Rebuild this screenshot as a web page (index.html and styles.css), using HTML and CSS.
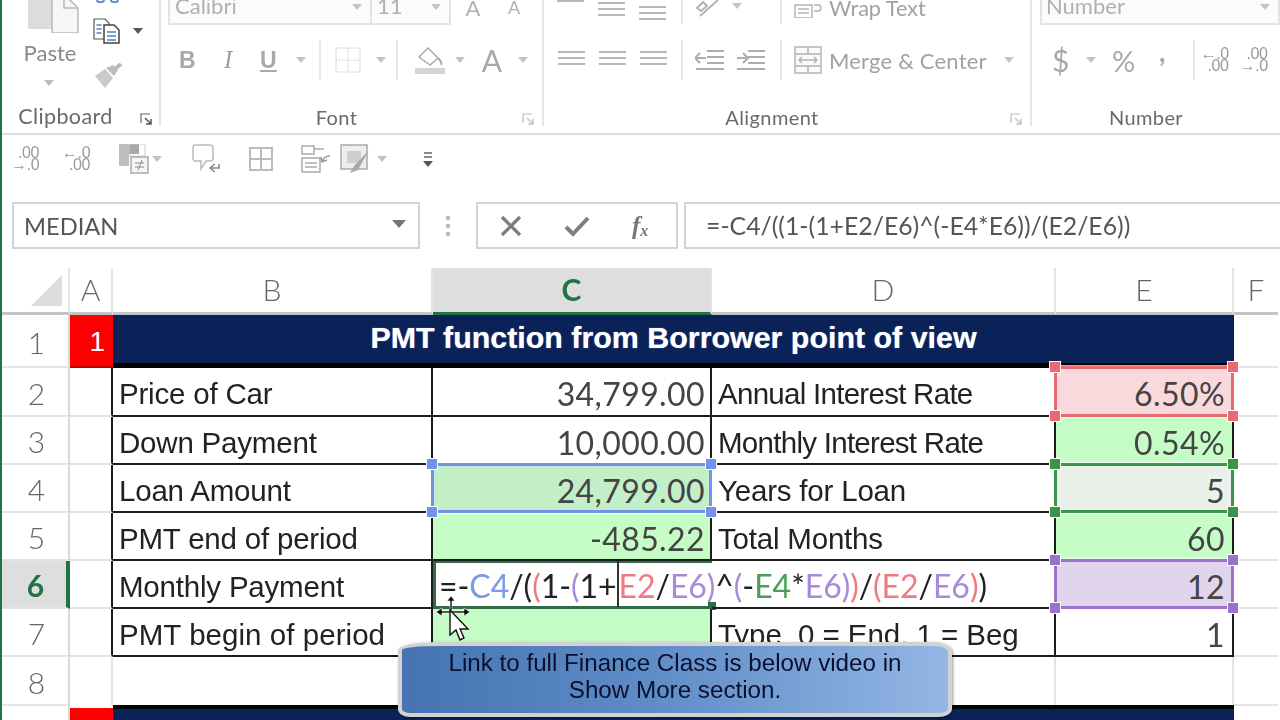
FILE: index.html
```html
<!DOCTYPE html>
<html lang="en">
<head>
<meta charset="utf-8">
<title>PMT function</title>
<link rel="stylesheet" href="styles.css">
</head>
<body>
<div class="app">
  <section class="ribbon">
    <div class="group clipboard">
      <div class="group-body clip-body">
        <div class="paste">
          <svg class="paste-icon" width="52" height="33" viewBox="0 0 52 33"><rect x="0" y="-6" width="24" height="35" fill="#dcdcdc"/><path d="M24 -6h12l14 14v25H26a2 2 0 0 1-2-2z" fill="#f6f6f6" stroke="#b9b9b9" stroke-width="1.500"/><path d="M36 -6v14h14" fill="none" stroke="#b9b9b9" stroke-width="1.500"/></svg>
          <span class="paste-label">Paste</span>
          <svg class="caret" width="10" height="6" viewBox="0 0 10 6"><path d="M0 0h10L5 6z" fill="#bdbdbd"/></svg>
        </div>
        <div class="clip-tools">
          <svg class="cut" width="24" height="3" viewBox="0 0 24 3"><path d="M1 0c0 3 7 3 7 0M15 0c0 3 7 3 7 0" fill="none" stroke="#5b8fc8" stroke-width="2"/></svg>
          <div class="clip-copy">
            <svg width="28" height="26" viewBox="0 0 28 26"><path d="M1 1h11l4 4v16H1z" fill="#fff" stroke="#555" stroke-width="1.200"/><path d="M3.500 7h5M3.500 11h5M3.500 15h5" stroke="#4f86c0" stroke-width="1.500"/><path d="M11 7h10l5 5v13H11z" fill="#fff" stroke="#444" stroke-width="1.500"/><path d="M14 14h9M14 18h9M14 22h9" stroke="#4f86c0" stroke-width="1.500"/></svg>
            <svg class="caret dark" width="10" height="6" viewBox="0 0 10 6"><path d="M0 0h10L5 6z" fill="#555"/></svg>
          </div>
          <svg class="brush" width="30" height="26" viewBox="0 0 30 26"><path d="M2 13l10-7 8 9-8 10z" fill="#c9c9c9"/><path d="M13 5l7-3 5 5-4 6z" fill="#bdbdbd"/><path d="M22 6l6-5" stroke="#bbb" stroke-width="4"/></svg>
        </div>
      </div>
      <div class="group-foot"><span class="foot-label dark-label">Clipboard</span>
        <svg class="launcher" width="12" height="12" viewBox="0 0 12 12"><path d="M1 10V1h9" fill="none" stroke="#666" stroke-width="1.200"/><path d="M5 5l6 6M11 6v5H6" fill="none" stroke="#555" stroke-width="1.500"/></svg></div>
    </div>

    <div class="group font">
      <div class="group-body">
        <div class="font-row1">
          <div class="font-box"><span class="box-text font-name">Calibri</span><i class="tri"></i></div>
          <div class="font-box size"><span class="box-text">11</span><i class="tri"></i></div>
          <span class="grow-a">A</span><span class="grow-a small">A</span>
        </div>
        <div class="font-row2">
          <b class="t-b">B</b><i class="t-i">I</i><u class="t-u">U</u><i class="tri t-tri"></i>
          <span class="sep s1"></span>
          <svg class="t-border" width="26" height="26" viewBox="0 0 26 26"><rect x="1" y="1" width="24" height="24" fill="none" stroke="#bbb" stroke-dasharray="1.500 1.500"/><path d="M13 1v24M1 13h24" stroke="#c4c4c4" stroke-dasharray="1.500 1.500"/></svg>
          <i class="tri t-tri2"></i>
          <span class="sep s2"></span>
          <svg class="t-fill" width="30" height="28" viewBox="0 0 30 28"><path d="M4 11l9-9 10 10-8 7z" fill="#fff" stroke="#aaa" stroke-width="1.500"/><path d="M23 12c3 3 4 6 3 7" fill="none" stroke="#aaa" stroke-width="2"/><rect y="22" width="30" height="6" fill="#d4d4d4"/></svg>
          <i class="tri t-tri3"></i>
          <span class="t-a">A</span><i class="tri t-tri4"></i>
        </div>
      </div>
      <div class="group-foot"><span class="foot-label">Font</span>
        <svg class="launcher light" width="12" height="12" viewBox="0 0 12 12"><path d="M1 10V1h9" fill="none" stroke="#bbb" stroke-width="1.200"/><path d="M5 5l6 6M11 6v5H6" fill="none" stroke="#c4c4c4" stroke-width="1.500"/></svg></div>
    </div>

    <div class="group align">
      <div class="group-body">
        <div class="align-row1">
          <span class="lines top-a"></span><span class="lines top-b"></span><span class="lines top-c"></span>
          <span class="sep-t"></span>
          <svg class="orient" width="34" height="18" viewBox="0 0 34 18"><path d="M4 16L22 0M1 8l6-6 4 4-6 5z" fill="none" stroke="#b4b4b4" stroke-width="2"/></svg>
          <i class="tri o-tri"></i>
          <span class="sep-t wide"></span>
          <svg class="wrap-icon" width="28" height="16" viewBox="0 0 28 16"><path d="M1 3h17v13H1zM4 7h11M4 11h11" fill="none" stroke="#b4b4b4" stroke-width="1.500"/><path d="M20 3h4a3 3 0 0 1 0 6h-4" fill="none" stroke="#b4b4b4" stroke-width="1.500"/></svg>
          <span class="wrap-label">Wrap Text</span>
        </div>
        <div class="align-row2">
          <span class="lines l"></span><span class="lines c"></span><span class="lines r"></span>
          <span class="sep s3"></span>
          <svg class="ind" width="30" height="22" viewBox="0 0 30 22"><path d="M12 2h17M12 8h17M12 14h17M1 20h28M1 9h10M5 4L0 9l5 5" fill="none" stroke="#adadad" stroke-width="2"/></svg>
          <svg class="ind i2" width="30" height="22" viewBox="0 0 30 22"><path d="M12 2h17M12 8h17M12 14h17M1 20h28M1 9h10M7 4l5 5-5 5" fill="none" stroke="#adadad" stroke-width="2"/></svg>
          <span class="sep s4"></span>
          <svg class="merge" width="28" height="28" viewBox="0 0 28 28"><rect x="1" y="1" width="26" height="26" fill="#fafafa" stroke="#b4b4b4" stroke-width="1.500"/><path d="M1 8h26M1 20h26M14 1v7M14 20v7M5 14h18M8 11l-3 3 3 3M20 11l3 3-3 3" fill="none" stroke="#b4b4b4" stroke-width="1.500"/></svg>
          <span class="merge-label">Merge &amp; Center</span><i class="tri m-tri"></i>
        </div>
      </div>
      <div class="group-foot"><span class="foot-label">Alignment</span>
        <svg class="launcher light" width="12" height="12" viewBox="0 0 12 12"><path d="M1 10V1h9" fill="none" stroke="#bbb" stroke-width="1.200"/><path d="M5 5l6 6M11 6v5H6" fill="none" stroke="#c4c4c4" stroke-width="1.500"/></svg></div>
    </div>

    <div class="group number">
      <div class="group-body">
        <div class="num-box"><span class="box-text">Number</span><i class="tri"></i></div>
        <div class="num-row">
          <span class="dollar">$</span><i class="tri d-tri"></i><span class="pct">%</span><span class="comma">,</span>
          <span class="sep s5"></span>
          <span class="decimal d1"><span>←.0</span><span class="r">.00</span></span>
          <span class="decimal d2"><span class="r">.00</span><span>→.0</span></span>
        </div>
      </div>
      <div class="group-foot"><span class="foot-label">Number</span></div>
    </div>
  </section>

  <section class="qat">
    <span class="decimal q1"><span class="r">.00</span><span>→.0</span></span>
    <span class="decimal q2"><span>←.0</span><span class="r">.00</span></span>
    <svg class="q3" width="30" height="30" viewBox="0 0 30 30"><rect width="10" height="22" fill="#bdbdbd"/><rect x="10" width="10" height="10" fill="#a9a9a9"/><rect x="10" y="0" width="16" height="12" fill="none" stroke="#ccc"/><rect x="12" y="13" width="17" height="16" fill="#f5f5f5" stroke="#aaa" stroke-width="1.500"/><path d="M16 19h9M16 23h9M19 26l4-10" stroke="#888"/></svg>
    <i class="tri q-tri1"></i>
    <svg class="q4" width="28" height="30" viewBox="0 0 28 30"><path d="M3 1h15a3 3 0 0 1 3 3v10a3 3 0 0 1-3 3h-4l-5 8v-8H3a3 3 0 0 1-2-3V4a3 3 0 0 1 2-3z" fill="#fff" stroke="#bbb" stroke-width="1.500"/><path d="M27 20v4h-8M23 20l-5 4 5 4" fill="none" stroke="#888" stroke-width="1.600"/></svg>
    <svg class="q5" width="24" height="24" viewBox="0 0 24 24"><rect x="1" y="1" width="22" height="22" fill="none" stroke="#bbb" stroke-width="2"/><path d="M12 1v22M1 12h22" stroke="#bbb" stroke-width="2"/></svg>
    <svg class="q6" width="30" height="28" viewBox="0 0 30 28"><path d="M1 1h12v8H1zM1 13h18v14H1z" fill="#fff" stroke="#aaa" stroke-width="1.500"/><path d="M4 18h12M4 22h12M13 4h10" stroke="#aaa" stroke-width="1.500"/><path d="M29 11c-5 0-7 2-8 6M20 12l1 5 5-2" fill="none" stroke="#999" stroke-width="1.500"/></svg>
    <svg class="q7" width="30" height="30" viewBox="0 0 30 30"><rect x="1" y="1" width="26" height="24" fill="#eee" stroke="#aaa" stroke-width="1.500"/><path d="M7 7h14v12H7z" fill="#cfcfcf"/><path d="M29 6L14 22l-4 7 8-3z" fill="#a9a9a9"/></svg>
    <i class="tri q-tri2"></i>
    <svg class="q8" width="10" height="16" viewBox="0 0 10 16"><path d="M1 2h8M1 6h8" stroke="#666" stroke-width="1.500"/><path d="M0 10h10l-5 6z" fill="#555"/></svg>
  </section>

  <section class="fbar">
    <div class="name-box"><span class="name">MEDIAN</span><i class="name-tri"></i></div>
    <svg class="dots" width="4" height="20" viewBox="0 0 4 20"><path d="M0 0h4v4H0zM0 8h4v4H0zM0 16h4v4H0z" fill="#bcbcbc"/></svg>
    <div class="fx-box">
      <svg width="22" height="22" viewBox="0 0 22 22"><path d="M2 2l18 18M20 2L2 20" stroke="#7d7d7d" stroke-width="3.200"/></svg>
      <svg width="26" height="22" viewBox="0 0 26 22"><path d="M2 12l7 7L24 3" fill="none" stroke="#7d7d7d" stroke-width="4"/></svg>
      <span class="fx">f<sub>x</sub></span>
    </div>
    <div class="formula">=-C4/((1-(1+E2/E6)^(-E4*E6))/(E2/E6))</div>
  </section>

  <section class="sheet">
    <div class="hd corner"><i class="corner-tri"></i></div>
    <div class="hd col">A</div><div class="hd col">B</div><div class="hd col on">C</div><div class="hd col">D</div><div class="hd col">E</div><div class="hd col last">F</div>

    <div class="hd row">1</div><div class="cell red">1</div><div class="cell title">PMT function from Borrower point of view</div><div class="cell free"></div>

    <div class="hd row">2</div><div class="cell a"></div><div class="cell lab">Price of Car</div><div class="cell num">34,799.00</div><div class="cell lab tight">Annual Interest Rate</div>
    <div class="cell num e pink">6.50%<span class="sel s-red"><i class="h tl"></i><i class="h tr"></i><i class="h bl"></i><i class="h br"></i></span></div><div class="cell free"></div>

    <div class="hd row">3</div><div class="cell a"></div><div class="cell lab">Down Payment</div><div class="cell num">10,000.00</div><div class="cell lab tight">Monthly Interest Rate</div><div class="cell num e mint">0.54%</div><div class="cell free"></div>

    <div class="hd row">4</div><div class="cell a"></div><div class="cell lab">Loan Amount</div>
    <div class="cell num sage">24,799.00<span class="sel s-blue"><i class="h tl"></i><i class="h tr"></i><i class="h bl"></i><i class="h br"></i></span></div><div class="cell lab">Years for Loan</div>
    <div class="cell num e pale">5<span class="sel s-green"><i class="h tl"></i><i class="h tr"></i><i class="h bl"></i><i class="h br"></i></span></div><div class="cell free"></div>

    <div class="hd row">5</div><div class="cell a"></div><div class="cell lab">PMT end of period</div><div class="cell num mint">-485.22</div><div class="cell lab">Total Months</div><div class="cell num e mint">60</div><div class="cell free"></div>

    <div class="hd row on">6</div><div class="cell a"></div><div class="cell lab">Monthly Payment</div>
    <div class="cell edit"><span class="d">=-</span><span class="cb">C4</span><span class="d">/(</span><span class="cr">(</span><span class="d">1-</span><span class="cp">(</span><span class="d">1+</span><span class="caret-bar"></span><span class="cr">E2</span><span class="d">/</span><span class="cp">E6)</span><span class="d">^</span><span class="cp">(</span><span class="d">-</span><span class="cg">E4</span><span class="d">*</span><span class="cp">E6)</span><span class="cr">)</span><span class="d">/</span><span class="cr">(E2</span><span class="d">/</span><span class="cp">E6</span><span class="cr">)</span><span class="d">)</span>
      <i class="fill-handle"></i>
      <svg class="pointer" width="40" height="46" viewBox="0 0 40 46"><path d="M15 0l-4 5h3v10h2V5h3zM0 16l6-4v3h22v-3l6 4-6 4v-3H6v3z" fill="#111" stroke="#fff" stroke-width=".6"/><path d="M14 14v25l6-5 4 10 4-2-4-9h8z" fill="#fff" stroke="#111" stroke-width="1.400"/></svg>
    </div>
    <div class="cell lab"></div>
    <div class="cell num e lilac">12<span class="sel s-purple"><i class="h tl"></i><i class="h tr"></i><i class="h bl"></i><i class="h br"></i></span></div><div class="cell free"></div>

    <div class="hd row">7</div><div class="cell a"></div><div class="cell lab wide">PMT begin of period</div><div class="cell num mint green-top"></div><div class="cell lab type">Type  0 = End, 1 = Beg</div><div class="cell num e">1</div><div class="cell free"></div>

    <div class="hd row">8</div><div class="cell plain"></div><div class="cell plain"></div><div class="cell plain"></div><div class="cell plain"></div><div class="cell plain"></div><div class="cell free"></div>

    <div class="hd row nine"></div><div class="cell red low"></div><div class="cell title low"></div><div class="cell free"></div>
  </section>

  <div class="callout">Link to full Finance Class is below video in<br>Show More section.</div>
</div>
</body>
</html>
```

FILE: styles.css
```css
* { box-sizing: border-box; }
html, body { margin: 0; padding: 0; background: #fff; }
body { width: 1280px; height: 720px; overflow: hidden; }
.app { position: relative; width: 1280px; height: 720px; overflow: hidden; border-left: 2px solid #217346; color: #444; font-family: Lato, "Liberation Sans", sans-serif; filter: blur(.4px); }

/* ribbon */
.ribbon { display: flex; height: 135px; border-bottom: 2px solid #dcdcdc; background: #fff; }
.group { display: flex; flex-direction: column; height: 126px; border-right: 2px solid #e6e6e6; position: relative; }
.clipboard { width: 159px; }
.font { width: 383px; }
.align { width: 488px; }
.number { flex: 1; border-right: 0; }
.group-body { flex: 1; position: relative; }
.group-foot { height: 26px; display: flex; align-items: center; justify-content: center; position: relative; padding-top: 8px; }
.foot-label { font-size: 20px; color: #6a6a6a; letter-spacing: .4px; line-height: 1; }
.font .foot-label, .align .foot-label { margin-right: 30px; }
.number .foot-label { margin-right: 20px; }
.launcher { position: absolute; right: 8px; top: 13px; }
.clipboard .foot-label { margin-right: 30px; font-size: 21.500px; }
.clipboard .launcher { right: 7px; }

.tri { display: inline-block; width: 0; height: 0; border-left: 5px solid transparent; border-right: 5px solid transparent; border-top: 6px solid #c4c4c4; flex: none; }

.clip-body { display: flex; }
.paste { width: 96px; display: flex; flex-direction: column; align-items: center; }
.paste-icon { margin-left: 8px; }
.paste-label { font-size: 22px; line-height: 26px; color: #8a8a8a; margin-top: 7px; }
.caret { display: block; }
.paste .caret { margin-top: 14px; margin-left: -3px; }
.clip-tools { display: flex; flex-direction: column; margin-left: -5px; }
.cut { display: block; margin: 0 0 15px 3px; }
.clip-copy { display: flex; align-items: center; gap: 12px; }
.brush { margin-top: 19px; }

.font-row1 { display: flex; align-items: flex-start; height: 30px; margin-left: 7px; }
.font-box { height: 25px; border: 2px solid #e4e4e4; border-top: 0; display: flex; align-items: flex-end; justify-content: space-between; padding: 0 8px 4px 5px; width: 204px; overflow: hidden; background: #fbfbfb; }
.font-box.size { width: 79px; border-left: 0; }
.font-box .tri { margin-bottom: 9px; }
.box-text { font-size: 22px; color: #b0b0b0; line-height: 26px; }
.grow-a { font-size: 22px; color: #b0b0b0; margin-left: 11px; width: 22px; text-align: center; line-height: 15px; }
.grow-a.small { font-size: 18px; margin-left: 19px; }

.font-row2 { display: flex; align-items: center; height: 40px; margin-top: 10px; position: relative; }
.font-row2 > * { flex: none; }
.t-b { font-size: 23px; color: #a8a8a8; margin-left: 18px; width: 16px; font-family: "Liberation Sans", sans-serif; }
.t-i { font-size: 25px; color: #a0a0a0; margin-left: 29px; width: 14px; font-family: "Liberation Serif", serif; }
.t-u { font-size: 23px; color: #a8a8a8; margin-left: 22px; width: 20px; font-weight: 700; font-family: "Liberation Sans", sans-serif; }
.t-tri { margin-left: 16px; }
.sep { display: block; width: 2px; height: 40px; background: #e8e8e8; }
.s1 { margin-left: 13px; }
.t-border { margin-left: 14px; }
.t-tri2 { margin-left: 15px; }
.s2 { margin-left: 10px; }
.t-fill { margin-left: 17px; }
.t-tri3 { margin-left: 10px; }
.t-a { font-size: 30px; color: #a8a8a8; margin-left: 16px; width: 22px; text-align: center; line-height: 1; }
.t-tri4 { margin-left: 15px; }

.align-row1 { display: flex; height: 30px; align-items: flex-start; }
.align-row1 > *, .align-row2 > * { flex: none; }
.lines { display: block; width: 27px; height: 18px; background: linear-gradient(#b8b8b8 2px, transparent 2px) 0 0 / 100% 6px; }
.top-a { margin-left: 13px; height: 2px; }
.top-b { margin-left: 14px; margin-top: 2px; height: 14px; }
.top-c { margin-left: 14px; margin-top: 6px; height: 14px; }
.sep-t { display: block; width: 2px; height: 24px; background: #e8e8e8; margin-left: 15px; }
.orient { margin-left: 13px; }
.o-tri { margin-left: 2px; margin-top: 3px; }
.sep-t.wide { margin-left: 38px; }
.wrap-icon { margin-left: 12px; margin-top: 2px; }
.wrap-label { font-size: 21.600px; color: #a2a2a2; margin-left: 7px; line-height: 16px; }

.align-row2 { display: flex; align-items: center; height: 40px; margin-top: 10px; }
.lines.l { margin-left: 14px; }
.lines.c { margin-left: 14px; }
.lines.r { margin-left: 14px; }
.s3 { margin-left: 14px; }
.ind { margin-left: 12px; }
.ind.i2 { margin-left: 11px; }
.s4 { margin-left: 14px; }
.merge { margin-left: 12px; }
.merge-label { font-size: 22px; color: #a2a2a2; margin-left: 7px; letter-spacing: .2px; }
.m-tri { margin-left: 17px; }

.num-box { width: 240px; height: 25px; margin-left: 8px; border: 2px solid #e4e4e4; border-top: 0; display: flex; align-items: flex-end; justify-content: space-between; padding: 0 8px 4px 4px; background: #fbfbfb; overflow: hidden; }
.num-box .tri { margin-bottom: 9px; }
.num-row { display: flex; align-items: center; height: 40px; margin-top: 15px; }
.num-row > * { flex: none; }
.dollar { font-size: 30px; color: #a8a8a8; margin-left: 20px; width: 16px; }
.d-tri { margin-left: 18px; }
.pct { font-size: 29px; color: #a8a8a8; margin-left: 16px; width: 28px; }
.comma { font-size: 28px; color: #a8a8a8; font-weight: 700; margin-left: 19px; line-height: 1; margin-top: -18px; }
.s5 { margin-left: 27px; }
.decimal { display: inline-flex; flex-direction: column; font-size: 16px; line-height: 12px; color: #999; font-family: "Liberation Sans", sans-serif; width: 28px; letter-spacing: -.4px; }
.decimal .r { text-align: right; }
.num-row .d1 { margin-left: 6px; }
.num-row .d2 { margin-left: 11px; }

/* quick access row */
.qat { height: 67px; display: flex; align-items: center; padding-bottom: 19px; }
.qat > * { flex: none; }
.q1 { margin-left: 9px; }
.q2 { margin-left: 23px; }
.q3 { margin-left: 29px; }
.q-tri1 { margin-left: 3px; }
.q4 { margin-left: 30px; }
.q5 { margin-left: 29px; }
.q6 { margin-left: 28px; }
.q7 { margin-left: 9px; }
.q-tri2 { margin-left: 7px; }
.q8 { margin-left: 36px; }

/* formula bar */
.fbar { height: 66px; display: flex; align-items: flex-start; padding-left: 10px; }
.name-box { width: 408px; height: 47px; border: 2px solid #d4d4d4; display: flex; align-items: center; justify-content: space-between; padding: 0 12px 0 10px; }
.name { font-size: 23.700px; color: #555; }
.name-tri { width: 0; height: 0; border-left: 7px solid transparent; border-right: 7px solid transparent; border-top: 8px solid #777; margin-top: -4px; }
.dots { margin: 14px 26px 0 26px; }
.fx-box { width: 202px; height: 47px; border: 2px solid #d4d4d4; display: flex; align-items: center; gap: 42px; padding-left: 22px; }
.fx { font-family: "Liberation Serif", serif; font-style: italic; font-weight: 700; font-size: 25px; color: #777; line-height: 1; }
.fx sub { font-size: 16px; vertical-align: -2px; line-height: 0; }
.formula { flex: 1; height: 47px; margin-left: 6px; border: 2px solid #d4d4d4; border-right: 0; padding-left: 20px; font-size: 24.800px; line-height: 43px; color: #555; }

/* sheet */
.sheet { display: grid; grid-template-columns: 68px 43px 320px 279px 344px 178px 44px; grid-template-rows: 47px 53px 49px 48px 48px 48px 48px 48px 49px 20px; }
.hd { background: #fff; color: #666; font-size: 30px; display: flex; align-items: center; justify-content: center; line-height: 1; font-weight: 300; }
.col { border-right: 2px solid #e4e4e4; border-bottom: 3px solid #c4c4c4; padding-bottom: 2px; }
.col.last { border-right: 0; }
.col.on { background: #dedede; color: #217346; font-weight: 700; border-bottom-color: #217346; }
.corner { border-right: 2px solid #e4e4e4; border-bottom: 3px solid #c4c4c4; justify-content: flex-end; align-items: flex-end; padding: 0 6px 6px 0; }
.corner-tri { width: 0; height: 0; border-left: 31px solid transparent; border-bottom: 31px solid #dcdcdc; }
.row { border-right: 2px solid #d8d8d8; border-bottom: 2px solid #e4e4e4; padding: 2px 0 0 3px; }
.row.on { background: #dedede; color: #217346; font-weight: 700; border-right: 4px solid #217346; }
.row.nine { border-bottom: 0; }

.cell { position: relative; min-width: 0; white-space: nowrap; border-right: 2px solid #1c1c1c; border-bottom: 2px solid #1c1c1c; color: #333; }
.free { border-right: 0; border-bottom: 2px solid #e4e4e4; }
.a { border-right: 2px solid #1c1c1c; border-bottom: 2px solid #e4e4e4; }
.plain { border-right: 2px solid #e4e4e4; border-bottom: 0; }
.red { background: #fb0000; color: #fff; font-size: 28px; text-align: right; padding: 9px 8px 0 0; line-height: 36px; border: 0; font-family: "Liberation Sans", sans-serif; border-bottom: 2px solid #c80000; }
.red.low { border: 0; margin-top: 2px; }
.title { grid-column: 3 / span 4; background: #0b2259; color: #fff; font-family: "Liberation Sans", sans-serif; font-weight: 700; font-size: 30.400px; text-align: center; line-height: 44px; border: 0; border-bottom: 5px solid #000; text-shadow: 0 0 1px #a8c0e8; }
.title.low { border-bottom: 0; border-top: 4px solid #000; margin-top: -1px; }
.lab { font-family: "Liberation Sans", sans-serif; font-size: 29.500px; line-height: 52px; padding-left: 6px; letter-spacing: -.2px; color: #222; }
.tight { letter-spacing: -.72px; }
.wide { letter-spacing: .05px; }
.type { white-space: pre; letter-spacing: -.05px; }
.num { font-size: 32px; line-height: 51px; text-align: right; padding-right: 5px; color: #444; letter-spacing: .4px; }
.e { padding-right: 7px; }
.pink { background: #f9d9db; }
.mint { background: #c6fcc6; }
.sage { background: #c2efc8; }
.pale { background: #e9f1ea; }
.lilac { background: #e0d5ec; }
.green-top { border-top: 0; border-bottom-color: transparent; }

.edit { font-size: 32px; line-height: 49px; padding-left: 6px; letter-spacing: -.05px; border-right: 0; background: #fff; box-shadow: inset 3px 2px 0 #2f6b46; border-bottom: 3px solid #2f6b46; }
.d { color: #222; }
.cb { color: #7b9be8; }
.cr { color: #ee7a82; }
.cp { color: #a78bd8; }
.cg { color: #4a9e58; }
.caret-bar { display: inline-block; width: 2px; height: 46px; background: #333; vertical-align: top; }
.fill-handle { position: absolute; right: -4px; bottom: -4px; width: 8px; height: 8px; background: #2f6b46; }
.pointer { position: absolute; left: 3px; top: 35px; z-index: 6; }

.sel { position: absolute; left: -2px; right: -2px; top: -2px; bottom: -2px; border: 3px solid; z-index: 4; box-shadow: 0 0 0 1px rgba(255,255,255,.7); }
.s-red { color: #e96a72; }
.s-blue { color: #7493e8; }
.s-green { color: #3c9448; }
.s-purple { color: #9a72c8; }
.h { position: absolute; width: 10px; height: 10px; background: currentColor; box-shadow: 0 0 0 1px #fff; }
.tl { left: -7px; top: -7px; }
.tr { right: -7px; top: -7px; }
.bl { left: -7px; bottom: -7px; }
.br { right: -7px; bottom: -7px; }

/* callout */
.callout { position: absolute; left: 396px; top: 642px; width: 554px; height: 75px; padding-top: 4px; border: 4px solid #d2d2d2; border-radius: 40px 18px 14px 12px / 8px 10px 8px 8px; background: linear-gradient(90deg, #4674b2 0%, #5e8cc6 45%, #93b6e4 100%); color: #0b1030; font-family: "Liberation Sans", sans-serif; font-size: 24.200px; line-height: 26.500px; text-align: center; box-shadow: 1px 1px 3px rgba(0,0,0,.4); z-index: 8; }
```
